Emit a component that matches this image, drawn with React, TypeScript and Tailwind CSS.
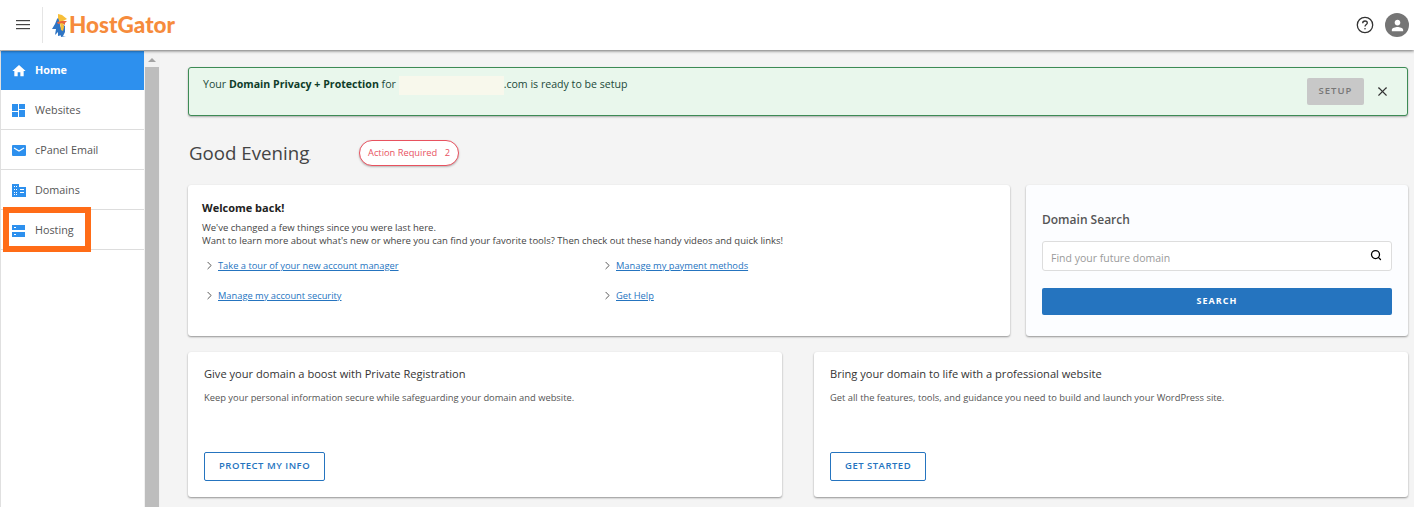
import { ChevronRight, Search, X } from 'lucide-react';

function GatorLogo() {
  return (
    <svg width="16" height="23" viewBox="0 0 16 23">
      <path d="M7 3 L8 11 L10 21 L6 22 L6 18 L3 21 L4 15 L0 15 L3 10 L5 5 Z" fill="#2f75c4" />
      <path d="M10 10 L13 12 L13 18 L11 22 L14 22 L9 23 L8 14 Z" fill="#2f75c4" />
      <path d="M6 0 L10 1 L15 5 L11 7 L12 13 L11 17 L9 16 L8 9 L6 4 Z" fill="#f7bf3a" />
      <path d="M5 8 L10 7 L15 7 L13 9 L13 11 L10 9 L6 10 Z" fill="#e8643c" />
    </svg>
  );
}

function HamburgerIcon() {
  return (
    <svg width="14" height="10" viewBox="0 0 14 10" fill="#444444">
      <rect width="14" height="1.2" />
      <rect y="4" width="14" height="1.2" />
      <rect y="8" width="14" height="1.2" />
    </svg>
  );
}

function HomeIcon() {
  return (
    <svg width="16" height="16" viewBox="0 0 24 24" fill="#ffffff">
      <path d="M10 20v-6h4v6h5v-8h3L12 3 2 12h3v8z" />
    </svg>
  );
}

function HelpIcon() {
  return (
    <svg width="18" height="18" viewBox="0 0 18 18" fill="none" stroke="#333333">
      <circle cx="9" cy="9" r="7.7" strokeWidth="1.3" />
      <path d="M6.7 7.2 C6.7 5.7 7.8 5 9 5 C10.3 5 11.3 5.8 11.3 7 C11.3 8.5 9 8.6 9 10.6" strokeWidth="1.3" />
      <circle cx="9" cy="12.8" r="0.8" fill="#333333" stroke="none" />
    </svg>
  );
}

function PersonIcon() {
  return (
    <svg width="17" height="17" viewBox="0 0 24 24" fill="#ffffff">
      <path d="M12 12c2.2 0 4-1.8 4-4s-1.8-4-4-4-4 1.8-4 4 1.8 4 4 4zm0 2c-2.7 0-8 1.3-8 4v2h16v-2c0-2.7-5.3-4-8-4z" />
    </svg>
  );
}

function WebsitesIcon() {
  return (
    <svg width="13" height="13" viewBox="0 0 13 13" fill="#2d90ee">
      <rect x="0" y="0" width="6" height="7" />
      <rect x="0" y="8" width="6" height="5" />
      <rect x="7" y="0" width="6" height="5" />
      <rect x="7" y="6" width="6" height="7" />
    </svg>
  );
}

function EmailIcon() {
  return (
    <svg width="14" height="11" viewBox="0 0 14 11">
      <rect width="14" height="11" rx="1" fill="#2d90ee" />
      <path d="M2 3 L7 6 L12 3" fill="none" stroke="#fff" strokeWidth="1.2" />
    </svg>
  );
}

function DomainsIcon() {
  return (
    <svg width="14" height="13" viewBox="0 0 14 13" fill="#2d90ee">
      <path d="M0 0 H7 V3 H14 V13 H0 Z" />
      <g fill="#fff">
        <rect x="2" y="2" width="1" height="1" />
        <rect x="4" y="2" width="1" height="1" />
        <rect x="2" y="5" width="1" height="1" />
        <rect x="4" y="5" width="1" height="1" />
        <rect x="2" y="8" width="1" height="1" />
        <rect x="4" y="8" width="1" height="1" />
        <rect x="2" y="10" width="1" height="1" />
        <rect x="4" y="10" width="1" height="1" />
        <rect x="8" y="5" width="4" height="1" />
        <rect x="8" y="8" width="4" height="1" />
      </g>
    </svg>
  );
}

function HostingIcon() {
  return (
    <svg width="13" height="12" viewBox="0 0 13 12" fill="#2d90ee">
      <rect width="13" height="5" />
      <rect y="7" width="13" height="5" />
      <rect x="2" y="2" width="2" height="1" fill="#fff" />
      <rect x="2" y="9" width="2" height="1" fill="#fff" />
    </svg>
  );
}

function NavItem({ icon, label, active }: { icon: React.ReactNode; label: string; active?: boolean }) {
  return (
    <div
      className={
        active
          ? 'flex h-[39px] items-center bg-[#2d90ee] font-bold text-white'
          : 'flex h-[40px] items-center border-b border-[#dddddd] pt-[2px] text-[#555555]'
      }
    >
      <div className="flex w-[34px] shrink-0 justify-center pl-[1px]">{icon}</div>
      <span className="text-[10.8px]">{label}</span>
    </div>
  );
}

function QuickLink({ label }: { label: string }) {
  return (
    <div className="flex items-center">
      <ChevronRight size={13} strokeWidth={1.8} className="mr-[2px] -ml-[1px] text-[#555555]" />
      <a className="text-[9.3px] text-[#2574bf] underline">{label}</a>
    </div>
  );
}

function PromoCard({ title, text, button }: { title: string; text: string; button: string }) {
  return (
    <div className="flex h-[145px] flex-1 flex-col rounded-[3px] bg-white px-[16px] pt-[14px] shadow-[0_1px_2px_rgba(0,0,0,0.4)]">
      <h2 className="text-[11.1px] leading-[16px] font-medium text-[#333333]">{title}</h2>
      <p className="mt-[9px] text-[9.35px] leading-[14px] text-[#555555]">{text}</p>
      <button className="mt-[47px] h-[29px] self-start rounded-[2px] border border-[#2574bf] px-[14px] text-[9.5px] font-semibold tracking-[0.5px] text-[#2574bf]">
        {button}
      </button>
    </div>
  );
}

export default function App() {
  return (
    <div className="relative flex h-[507px] w-[1414px] flex-col overflow-hidden bg-[#f4f4f4] font-['Open_Sans',sans-serif]">
      <header className="relative z-10 flex h-[50px] shrink-0 items-center bg-white pr-[5px] shadow-[0_1px_3px_rgba(0,0,0,0.55)]">
        <div className="flex h-[36px] w-[43px] items-center justify-center border-r border-[#e5e5e5] pl-[3px]">
          <HamburgerIcon />
        </div>
        <div className="ml-[9px] flex items-center gap-[1px]">
          <GatorLogo />
          <span className="font-['Lato',sans-serif] text-[22.5px] leading-none font-black text-[#f68b3c]">HostGator</span>
        </div>
        <div className="ml-auto flex items-center gap-[11px]">
          <HelpIcon />
          <div className="flex h-[24px] w-[24px] items-center justify-center rounded-full bg-[#757575]">
            <PersonIcon />
          </div>
        </div>
      </header>

      <div className="flex min-h-0 flex-1">
        <aside className="flex w-[160px] shrink-0 border-l border-[#e0e0e0] bg-white">
          <nav className="w-[143px] pt-[1px]">
            <NavItem active icon={<HomeIcon />} label="Home" />
            <NavItem icon={<WebsitesIcon />} label="Websites" />
            <NavItem icon={<EmailIcon />} label="cPanel Email" />
            <NavItem icon={<DomainsIcon />} label="Domains" />
            <NavItem icon={<HostingIcon />} label="Hosting" />
          </nav>
          <div className="flex w-[16px] flex-col items-center bg-[#f1f1f1] px-[1px]">
            <div className="mt-[8px] h-0 w-0 border-x-[4px] border-b-[4px] border-x-transparent border-b-[#a3a3a3]" />
            <div className="mt-[5px] w-full flex-1 bg-[#bdbdbd]" />
          </div>
        </aside>

        <main className="min-w-0 flex-1 pt-[17px] pr-[6px] pl-[28px]">
          <div className="flex h-[49px] items-start justify-between rounded-[3px] border border-[#3d8b55] bg-[#e9f7ec] pr-[17px] pl-[14px] shadow-[0_1px_2px_rgba(0,0,0,0.3)]">
            <p className="mt-[8px] flex text-[10.6px] leading-[16px] text-[#22493a]">
              Your&nbsp;<b className="font-bold text-[#0f3d2a]">Domain Privacy + Protection</b>&nbsp;for&nbsp;
              <span className="inline-block h-[19px] w-[105px] bg-[#f8f8ec]" />
              <span>.com is ready to be setup</span>
            </p>
            <div className="mt-[10px] flex items-center gap-[11px]">
              <button className="h-[27px] w-[57px] rounded-[2px] bg-[#c8c8c8] text-[9.5px] font-semibold tracking-[1px] text-[#777777]">
                SETUP
              </button>
              <X size={15} strokeWidth={1.8} className="text-[#333333]" />
            </div>
          </div>

          <div className="mt-[23px] flex h-[28px] items-center">
            <h1 className="w-[171px] pl-[1px] text-[18.7px] text-[#444444]">
              Good Evening<span className="text-[6px]">,</span>
            </h1>
            <div className="flex h-[26px] w-[100px] items-center justify-between rounded-full border border-[#e8525f] bg-white px-[8px] text-[9.3px] text-[#e8525f] shadow-[0_1px_2px_rgba(0,0,0,0.25)]">
              <span>Action Required</span>
              <span>2</span>
            </div>
          </div>

          <div className="mt-[18px] flex gap-[16px]">
            <section className="h-[151px] w-[822px] rounded-[3px] bg-white pt-[15px] pl-[14px] shadow-[0_1px_2px_rgba(0,0,0,0.4)]">
              <h2 className="text-[11px] leading-[16px] font-bold text-[#222222]">Welcome back!</h2>
              <p className="mt-[5px] text-[9.5px] leading-[13px] text-[#444444]">
                We've changed a few things since you were last here.
                <br />
                Want to learn more about what's new or where you can find your favorite tools? Then check out these handy videos and quick links!
              </p>
              <div className="mt-[12px] grid w-[798px] grid-cols-2 gap-y-[16px] pl-[2px]">
                <QuickLink label="Take a tour of your new account manager" />
                <QuickLink label="Manage my payment methods" />
                <QuickLink label="Manage my account security" />
                <QuickLink label="Get Help" />
              </div>
            </section>

            <section className="h-[151px] flex-1 rounded-[3px] bg-[#fcfdff] px-[16px] pt-[26px] shadow-[0_1px_2px_rgba(0,0,0,0.4)]">
              <h2 className="text-[12px] leading-[17px] font-semibold text-[#555555]">Domain Search</h2>
              <div className="mt-[13px] flex h-[30px] items-center justify-between rounded-[3px] border border-[#dddddd] bg-white pr-[9px] pl-[8px]">
                <span className="pt-[6px] text-[10.5px] text-[#9a9a9a]">Find your future domain</span>
                <Search size={12} strokeWidth={2.5} className="mb-[2px] text-black" />
              </div>
              <button className="mt-[17px] h-[27px] w-full rounded-[2px] bg-[#2574bf] pb-[2px] text-[9px] font-bold tracking-[1px] text-white">
                SEARCH
              </button>
            </section>
          </div>

          <div className="mt-[16px] flex gap-[32px]">
            <PromoCard
              title="Give your domain a boost with Private Registration"
              text="Keep your personal information secure while safeguarding your domain and website."
              button="PROTECT MY INFO"
            />
            <PromoCard
              title="Bring your domain to life with a professional website"
              text="Get all the features, tools, and guidance you need to build and launch your WordPress site."
              button="GET STARTED"
            />
          </div>
        </main>
      </div>

      <div className="absolute top-[207px] left-[3px] z-20 h-[45px] w-[88px] border-[6px] border-[#ff6c17]" />
    </div>
  );
}
